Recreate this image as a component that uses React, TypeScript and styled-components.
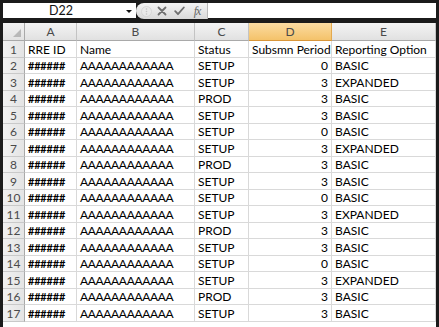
import React from "react";
import styled, { createGlobalStyle } from "styled-components";

const Global = createGlobalStyle`
  html, body { margin: 0; padding: 0; background: #1b1b1b; }
  #root { width: 439px; height: 327px; overflow: hidden; }
`;

const Frame = styled.div`
  width: 439px;
  height: 327px;
  box-sizing: border-box;
  padding: 3px 3px 0 3px;
  background: #1b1b1b;
  display: flex;
  flex-direction: column;
  gap: 4px;
  overflow: hidden;
  font-family: Lato, "Liberation Sans", sans-serif;
`;

const FormulaBar = styled.div`
  height: 16px;
  display: flex;
  align-items: stretch;
`;

const NameBox = styled.div`
  width: 133px;
  background: #fff;
  display: flex;
  align-items: center;
  font-size: 12.5px;
  color: #111;
  margin-bottom: 1px;
  padding-left: 46px;
  box-sizing: border-box;
`;

const NameText = styled.span`
  flex: 1;
`;

const DropArrow = styled.span`
  width: 0;
  height: 0;
  border-left: 3px solid transparent;
  border-right: 3px solid transparent;
  border-top: 3px solid #111;
  margin-right: 4px;
  margin-top: 1px;
`;

const Pill = styled.div`
  width: 72px;
  background: linear-gradient(#f4f4f4, #d9d9d9);
  border-radius: 9px 0 0 9px;
  display: flex;
  align-items: center;
  padding-left: 3px;
  box-sizing: border-box;
  border-right: 1px solid #b9b9b9;
`;

const PillSlot = styled.span<{ $w: number }>`
  width: ${(p) => p.$w}px;
  display: flex;
  justify-content: center;
  align-items: center;
  color: #777;
`;

const FxText = styled.span`
  font-family: "Liberation Serif", serif;
  font-style: italic;
  font-size: 12px;
  color: #666;
  letter-spacing: -1px;
`;

const FormulaInput = styled.div`
  flex: 1;
  background: #fff;
  margin-bottom: 1px;
`;

const COLS = [22, 52, 118, 54, 83, 104];

const Grid = styled.div`
  display: grid;
  grid-template-columns: ${COLS.map((c) => c + "px").join(" ")};
  grid-template-rows: 18px ${Array.from({ length: 18 }, (_, i) => (i % 2 === 0 ? "17px" : "16px")).join(" ")};
  background: #fff;
  font-size: 12px;
  color: #000;
`;

const Corner = styled.div`
  background: linear-gradient(#f3f3f3, #e2e2e2);
  border-right: 1px solid #a9a9a9;
  border-bottom: 1px solid #a9a9a9;
  box-sizing: border-box;
  display: flex;
  align-items: flex-end;
  justify-content: flex-end;
  padding: 0 3px 3px 0;
`;

const CornerTriangle = styled.span`
  width: 0;
  height: 0;
  border-left: 8px solid transparent;
  border-bottom: 8px solid #b8b8b8;
`;

const ColHead = styled.div<{ $sel?: boolean }>`
  background: ${(p) =>
    p.$sel ? "linear-gradient(#fbdca2, #f4c26a)" : "linear-gradient(#f4f4f4, #e1e1e1)"};
  border-right: 1px solid ${(p) => (p.$sel ? "#e3a94f" : "#c3c3c3")};
  border-bottom: 1px solid ${(p) => (p.$sel ? "#d9963a" : "#a9a9a9")};
  box-sizing: border-box;
  display: flex;
  align-items: center;
  justify-content: center;
  color: #4a4a4a;
  font-size: 12px;
`;

const RowHead = styled.div`
  background: linear-gradient(90deg, #f1f1f1, #e4e4e4);
  border-right: 1px solid #a9a9a9;
  border-bottom: 1px solid #c9c9c9;
  box-sizing: border-box;
  display: flex;
  align-items: center;
  justify-content: center;
  color: #4a4a4a;
  font-size: 12px;
`;

const Cell = styled.div<{ $right?: boolean }>`
  border-right: 1px solid #d9d9d9;
  border-bottom: 1px solid #d9d9d9;
  box-sizing: border-box;
  display: flex;
  align-items: center;
  justify-content: ${(p) => (p.$right ? "flex-end" : "flex-start")};
  padding: 0 3px 0 3px;
  white-space: nowrap;
  overflow: hidden;
`;

const Filler = styled.span`
  letter-spacing: -0.35px;
`;

const Hash = styled.span`
  font-size: 11px;
  font-weight: 700;
  letter-spacing: -0.2px;
`;

const pattern: [string, number, string][] = [
  ["SETUP", 0, "BASIC"],
  ["SETUP", 3, "EXPANDED"],
  ["PROD", 3, "BASIC"],
  ["SETUP", 3, "BASIC"],
];

const rows = Array.from({ length: 16 }, (_, i) => {
  const [status, period, option] = pattern[i % 4];
  return { n: i + 2, status, period, option };
});

const GripIcon = () => (
  <svg width="11" height="11" viewBox="0 0 11 11">
    <circle cx="5.5" cy="5.5" r="5" fill="#e9e9e9" stroke="#d2d2d2" strokeWidth="0.8" />
    <circle cx="5.5" cy="3" r="0.8" fill="#c4c4c4" />
    <circle cx="5.5" cy="5.5" r="0.8" fill="#c4c4c4" />
    <circle cx="5.5" cy="8" r="0.8" fill="#c4c4c4" />
  </svg>
);

const XIcon = () => (
  <svg width="10" height="10" viewBox="0 0 10 10">
    <path d="M1.5 1.5 L8.5 8.5 M8.5 1.5 L1.5 8.5" stroke="#6f6f6f" strokeWidth="1.8" strokeLinecap="round" />
  </svg>
);

const CheckIcon = () => (
  <svg width="11" height="10" viewBox="0 0 11 10">
    <path d="M1.2 5.2 L4 8.2 L9.8 1.5" stroke="#6f6f6f" strokeWidth="1.8" fill="none" strokeLinecap="round" strokeLinejoin="round" />
  </svg>
);

export default function App() {
  return (
    <>
      <Global />
      <Frame>
        <FormulaBar>
          <NameBox>
            <NameText>D22</NameText>
            <DropArrow />
          </NameBox>
          <Pill>
            <PillSlot $w={14}>
              <GripIcon />
            </PillSlot>
            <PillSlot $w={18}>
              <XIcon />
            </PillSlot>
            <PillSlot $w={17}>
              <CheckIcon />
            </PillSlot>
            <PillSlot $w={18}>
              <FxText>fx</FxText>
            </PillSlot>
          </Pill>
          <FormulaInput />
        </FormulaBar>
        <Grid>
          <Corner>
            <CornerTriangle />
          </Corner>
          {["A", "B", "C", "D", "E"].map((c) => (
            <ColHead key={c} $sel={c === "D"}>
              {c}
            </ColHead>
          ))}
          <RowHead>1</RowHead>
          <Cell>RRE ID</Cell>
          <Cell>Name</Cell>
          <Cell>Status</Cell>
          <Cell>Subsmn Period</Cell>
          <Cell>Reporting Option</Cell>
          {rows.map((r) => (
            <React.Fragment key={r.n}>
              <RowHead>{r.n}</RowHead>
              <Cell>
                <Hash>######</Hash>
              </Cell>
              <Cell>
                <Filler>AAAAAAAAAAAA</Filler>
              </Cell>
              <Cell>{r.status}</Cell>
              <Cell $right>{r.period}</Cell>
              <Cell>{r.option}</Cell>
            </React.Fragment>
          ))}
        </Grid>
      </Frame>
    </>
  );
}
